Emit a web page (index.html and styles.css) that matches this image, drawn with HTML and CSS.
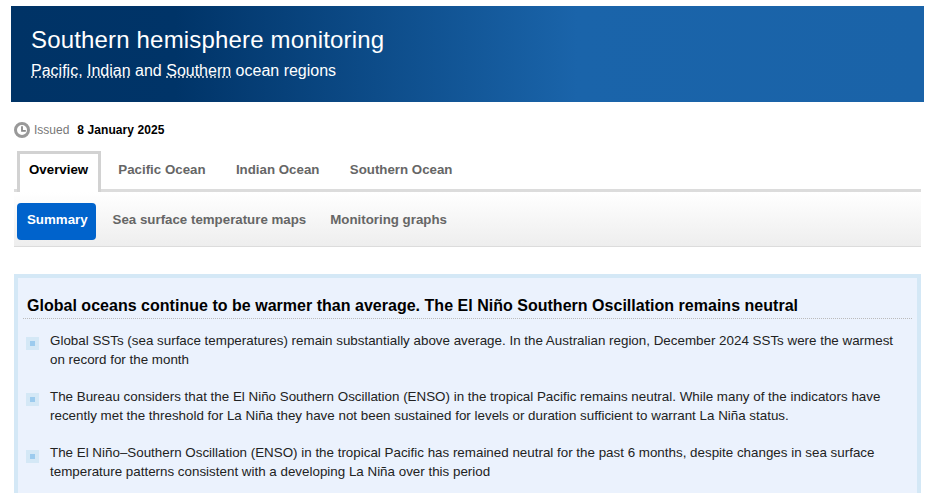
FILE: index.html
```html
<!DOCTYPE html>
<html lang="en">

<head>
    <meta charset="UTF-8">
    <meta name="viewport" content="width=device-width, initial-scale=1.0">
    <title>Southern hemisphere monitoring</title>
    <link rel="stylesheet" href="styles.css">
</head>

<body>

    <header class="banner">
        <h1>Southern hemisphere monitoring</h1>
        <p><span class="term">Pacific</span>, <span class="term">Indian</span> and <span class="term">Southern</span> ocean regions</p>
    </header>

    <main class="content">
        <div class="issued">
            <svg class="clock" width="16" height="16" viewBox="0 0 16 16">
                <circle cx="8" cy="8" r="6.5" fill="none" stroke="#999" stroke-width="3"/>
                <path d="M8 4.2V8.8H11.8" fill="none" stroke="#888" stroke-width="1.8"/>
            </svg>
            <span class="issued-label">Issued</span>
            <strong>8 January 2025</strong>
        </div>

        <nav class="tabs">
            <a class="tab active">Overview</a>
            <a class="tab">Pacific Ocean</a>
            <a class="tab">Indian Ocean</a>
            <a class="tab">Southern Ocean</a>
        </nav>

        <nav class="subtabs">
            <a class="subtab active">Summary</a>
            <a class="subtab">Sea surface temperature maps</a>
            <a class="subtab">Monitoring graphs</a>
        </nav>

        <section class="panel">
            <h2>Global oceans continue to be warmer than average. The El Niño Southern Oscillation remains neutral</h2>
            <ul>
                <li>Global SSTs (sea surface temperatures) remain substantially above average. In the Australian region, December 2024 SSTs were the warmest on record for the month</li>
                <li>The Bureau considers that the El Niño Southern Oscillation (ENSO) in the tropical Pacific remains neutral. While many of the indicators have recently met the threshold for La Niña they have not been sustained for levels or duration sufficient to warrant La Niña status.</li>
                <li>The El Niño–Southern Oscillation (ENSO) in the tropical Pacific has remained neutral for the past 6 months, despite changes in sea surface temperature patterns consistent with a developing La Niña over this period</li>
            </ul>
        </section>
    </main>

</body>

</html>
```

FILE: styles.css
```css
* {
    margin: 0;
    padding: 0;
    box-sizing: border-box;
}

html,
body {
    height: 493px;
    overflow: hidden;
}

body {
    font-family: "Liberation Sans", Arial, sans-serif;
    background-color: white;
    padding: 6px 2px 0 11px;
}

.banner {
    height: 96px;
    padding: 19px 20px 0;
    color: white;
    background: linear-gradient(90deg, #003366 0%, #003468 18%, #1a64aa 62%, #1a63a8 100%);
}

.banner h1 {
    font-size: 24px;
    font-weight: normal;
    line-height: 30px;
    letter-spacing: 0.17px;
}

.banner p {
    font-size: 16px;
    line-height: 20px;
    margin-top: 6px;
}

.term {
    text-decoration: underline dotted #ddd;
    text-underline-offset: 1px;
}

.content {
    padding: 0 3px;
}

.issued {
    display: flex;
    align-items: center;
    height: 16px;
    margin-top: 20px;
    font-size: 12px;
}

.issued strong {
    letter-spacing: 0.08px;
}

.clock {
    margin-right: 4px;
}

.issued-label {
    color: #777;
    margin-right: 8px;
}

.tabs {
    display: flex;
    height: 41px;
    margin-top: 13px;
    padding-left: 3px;
    border-bottom: 3px solid #dcdcdc;
}

.tab {
    height: 41px;
    padding: 0 15.2px;
    font-size: 13.3px;
    font-weight: bold;
    line-height: 37px;
    color: #666;
}

.tab.active {
    color: black;
    padding: 0 10px 0 9px;
    margin-right: 2px;
    background-color: white;
    border: 3px solid #d2d2d2;
    border-bottom: none;
    line-height: 31px;
}

.subtabs {
    display: flex;
    align-items: flex-start;
    height: 55px;
    padding: 11px 0 0 3px;
    background: linear-gradient(#ffffff, #eeeeee);
    border-bottom: 1px solid #dcdcdc;
}

.subtab {
    height: 37px;
    padding: 0 12px;
    font-size: 13.3px;
    font-weight: bold;
    line-height: 34px;
    color: #666;
}

.subtab.active {
    color: white;
    padding: 0 8px 0 10px;
    margin-right: 5px;
    background-color: #0063cc;
    border-radius: 4px;
}

.panel {
    margin-top: 27px;
    height: 219px;
    padding: 18px 5px 0 5px;
    background-color: #ebf2fd;
    border: 4px solid #d4e8f6;
    border-bottom: none;
}

.panel h2 {
    font-size: 16px;
    letter-spacing: 0.02px;
    line-height: 20px;
    padding: 0 0 2px 4px;
    border-bottom: 1px dotted #bbb;
    color: black;
}

.panel ul {
    list-style: none;
    margin: 12px 0 0 4px;
}

.panel li {
    position: relative;
    padding-left: 23px;
    padding-right: 6px;
    margin-bottom: 18px;
    font-size: 13.38px;
    line-height: 19px;
    color: #222;
}

.panel li::before {
    content: "";
    position: absolute;
    left: -1px;
    top: 6px;
    width: 13px;
    height: 13px;
    background-color: #d4e8f6;
}

.panel li::after {
    content: "";
    position: absolute;
    left: 3px;
    top: 10px;
    width: 5px;
    height: 5px;
    background-color: #9ccbee;
}

.panel li:last-child::before {
    top: 7px;
}

.panel li:last-child::after {
    top: 11px;
}
```
